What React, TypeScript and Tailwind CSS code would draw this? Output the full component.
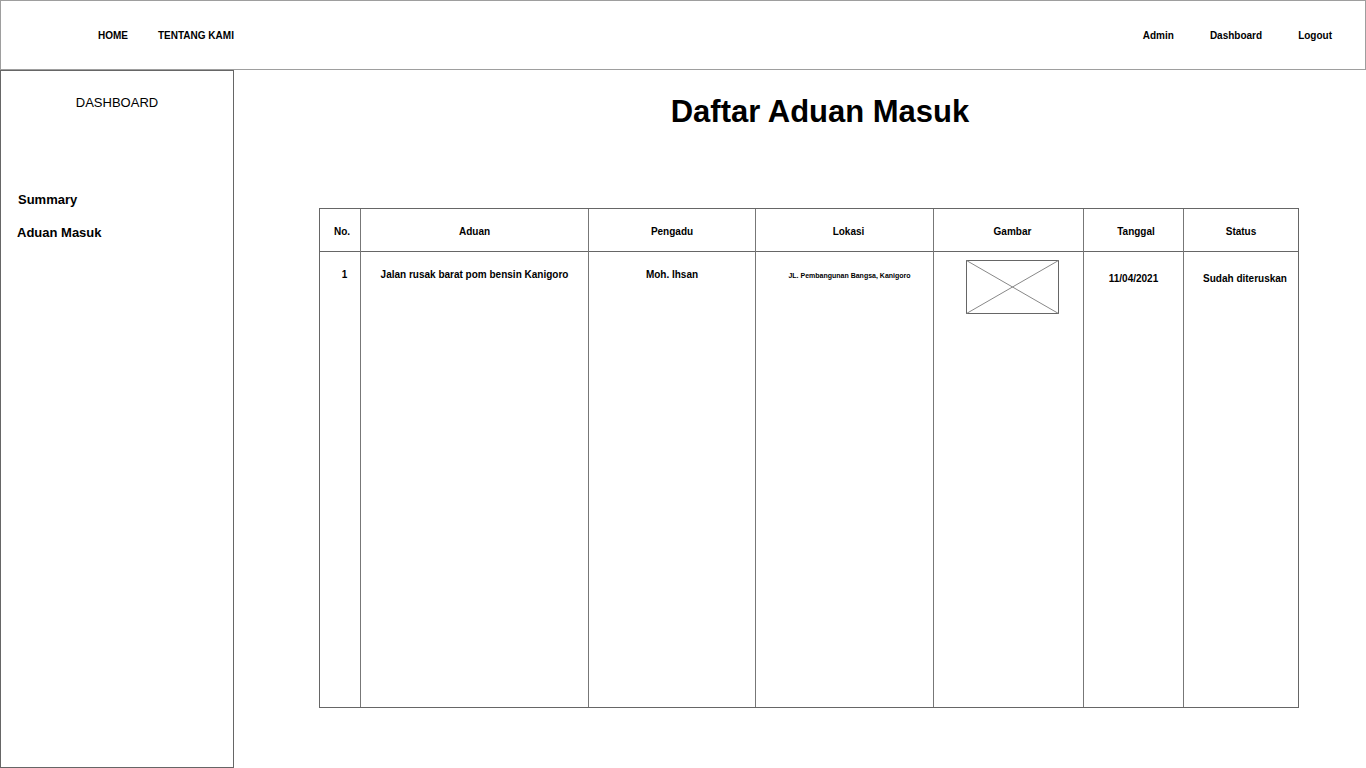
import React from "react";

const columns = [
  { title: "No.", pad: "pl-[4px]" },
  { title: "Aduan", pad: "" },
  { title: "Pengadu", pad: "" },
  { title: "Lokasi", pad: "pl-[8px]" },
  { title: "Gambar", pad: "pl-[8px]" },
  { title: "Tanggal", pad: "pl-[5px]" },
  { title: "Status", pad: "" },
];

const ImagePlaceholder = () => (
  <svg width="93" height="54" viewBox="0 0 93 54" className="block">
    <rect x="0.5" y="0.5" width="92" height="53" fill="white" stroke="#666" />
    <line x1="0.5" y1="0.5" x2="92.5" y2="53.5" stroke="#888" strokeWidth="1" />
    <line x1="92.5" y1="0.5" x2="0.5" y2="53.5" stroke="#888" strokeWidth="1" />
  </svg>
);

const App = () => {
  return (
    <div
      className="w-[1366px] h-[768px] bg-white text-black overflow-hidden"
      style={{ fontFamily: '"Liberation Sans", Arial, sans-serif' }}
    >
      {/* top navigation */}
      <header className="h-[70px] border border-[#9e9e9e] flex items-center justify-between pl-[97px] pr-[33px] text-[10px] font-bold">
        <nav className="flex items-center gap-[30px]">
          <span>HOME</span>
          <span>TENTANG KAMI</span>
        </nav>
        <nav className="flex items-center gap-[36px]">
          <span>Admin</span>
          <span>Dashboard</span>
          <span>Logout</span>
        </nav>
      </header>

      <div className="flex">
        {/* sidebar */}
        <aside className="w-[234px] h-[698px] shrink-0 border border-[#666]">
          <div className="pt-[24px] text-center text-[13px] leading-[15px]">DASHBOARD</div>
          <ul className="mt-[82px] text-[13px] font-bold leading-[15px]">
            <li className="pl-[17px]">Summary</li>
            <li className="pl-[16px] mt-[18px]">Aduan Masuk</li>
          </ul>
        </aside>

        {/* main content */}
        <main className="flex-1">
          <h1 className="pl-[40px] pt-[24px] text-center text-[31px] leading-[36px] font-bold">
            Daftar Aduan Masuk
          </h1>

          <div className="ml-[85px] mt-[78px] w-[980px] h-[500px] border border-[#666] grid grid-cols-[40px_228px_167px_178px_150px_100px_115px]">
            {columns.map((col, i) => (
              <div key={col.title} className={i === 0 ? "flex flex-col" : "flex flex-col border-l border-[#777]"}>
                <div
                  className={`h-[43px] border-b border-[#666] flex items-center justify-center pt-[2px] text-[10px] font-bold ${col.pad}`}
                >
                  {col.title}
                </div>
                <div className="flex-1 text-[10px] font-bold leading-[12px]">
                  {i === 0 && <div className="pt-[17px] text-center pl-[9px]">1</div>}
                  {i === 1 && (
                    <div className="pt-[17px] text-center">Jalan rusak barat pom bensin Kanigoro</div>
                  )}
                  {i === 2 && <div className="pt-[17px] text-center">Moh. Ihsan</div>}
                  {i === 3 && (
                    <div className="pt-[19px] text-center text-[7px] leading-[9px] pl-[10px]">
                      JL. Pembangunan Bangsa, Kanigoro
                    </div>
                  )}
                  {i === 4 && (
                    <div className="pt-[8px] pl-[32px]">
                      <ImagePlaceholder />
                    </div>
                  )}
                  {i === 5 && <div className="pt-[21px] text-center">11/04/2021</div>}
                  {i === 6 && <div className="pt-[21px] text-center pl-[8px]">Sudah diteruskan</div>}
                </div>
              </div>
            ))}
          </div>
        </main>
      </div>
    </div>
  );
};

export default App;
